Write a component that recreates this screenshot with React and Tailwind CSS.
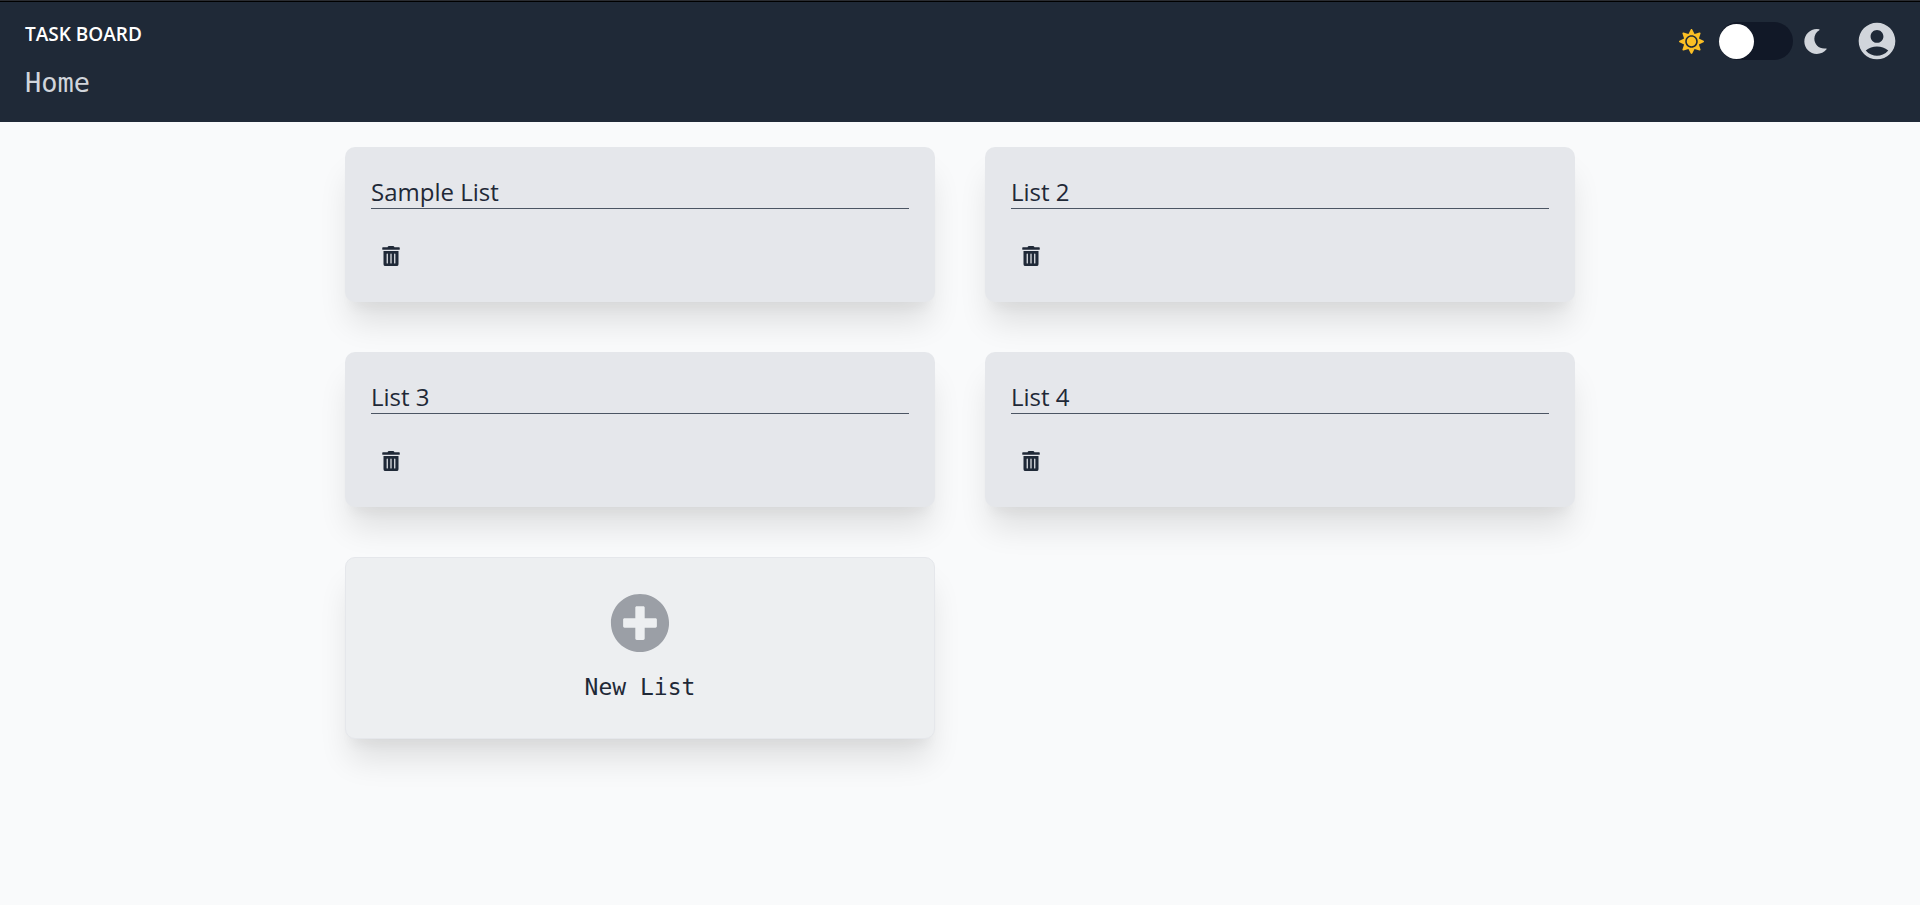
import { useState } from "react";
import { FaSun, FaMoon, FaTrashAlt, FaPlusCircle } from "react-icons/fa";
import { MdAccountCircle } from "react-icons/md";

const initialLists = ["Sample List", "List 2", "List 3", "List 4"];

function ListCard({ title }) {
  return (
    <li className="rounded-[10px] bg-[#e5e7eb] px-[26px] pt-7 pb-[26px] shadow-[0_25px_32px_-5px_rgba(0,0,0,0.11),0_12px_12px_-6px_rgba(0,0,0,0.04)]">
      <input
        aria-label="List title"
        defaultValue={title}
        className="block h-[34px] w-full border-b border-[#4b5563] bg-transparent font-['Open_Sans','Noto_Sans',sans-serif] text-2xl text-[#1f2937] outline-none"
      />
      <button aria-label="Delete list" className="mt-[27px] block p-[10px] text-xl text-[#1f2937]">
        <FaTrashAlt />
      </button>
    </li>
  );
}

export default function App() {
  const [dark, setDark] = useState(false);
  return (
    <div className="min-h-screen border-t border-[#2a2c31] bg-[#f9fafb] font-['Open_Sans','Noto_Sans',sans-serif]">
      <header className="flex items-start justify-between border-t border-black bg-[#1f2937] pt-4 pr-[21px] pb-[19px] pl-[25px]">
        <div>
          <h1 className="text-[19px] leading-8 font-semibold text-white">TASK BOARD</h1>
          <nav className="mt-[13px]">
            <a href="#home" className="block font-['DejaVu_Sans_Mono',monospace] text-[27px] leading-10 text-[#d1d5db]">
              Home
            </a>
          </nav>
        </div>
        <div className="flex items-center pt-[1px]">
          <FaSun className="text-[25px] text-[#fbbf24]" />
          <label className="mr-[10px] ml-[15px] flex h-[38px] w-[74px] cursor-pointer items-center rounded-full bg-[#111827]">
            <input
              type="checkbox"
              aria-label="Dark mode"
              checked={dark}
              onChange={(e) => setDark(e.target.checked)}
              className="peer sr-only"
            />
            <span className="size-[35px] rounded-full bg-white peer-checked:ml-auto" />
          </label>
          <FaMoon className="text-[25px] text-[#d1d5db]" />
          <button aria-label="Account" className="ml-[27px] text-[44px] text-[#d1d5db]">
            <MdAccountCircle />
          </button>
        </div>
      </header>
      <main className="mx-auto max-w-[1280px] p-[25px]">
        <ul className="grid grid-cols-2 gap-[50px]">
          {initialLists.map((title) => (
            <ListCard key={title} title={title} />
          ))}
          <li className="flex">
            <button className="flex w-full flex-col items-center rounded-[10px] border border-[#e5e7eb] bg-[#edeff1] px-6 pt-[35px] pb-[33px] shadow-[0_25px_32px_-5px_rgba(0,0,0,0.11),0_12px_12px_-6px_rgba(0,0,0,0.04)]">
              <FaPlusCircle className="text-[60px] text-[#9b9fa6]" />
              <span className="mt-4 font-['DejaVu_Sans_Mono',monospace] text-[23px] leading-9 text-[#1f2937]">New List</span>
            </button>
          </li>
        </ul>
      </main>
    </div>
  );
}
